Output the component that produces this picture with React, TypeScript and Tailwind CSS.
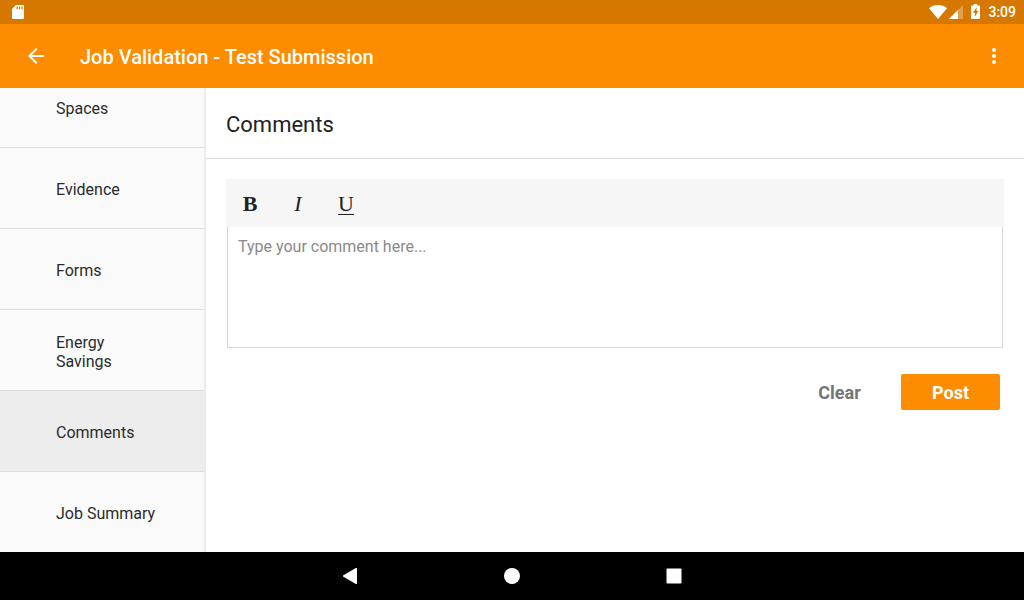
import { useState } from "react";
import clsx from "clsx";

const sections = ["Spaces", "Evidence", "Forms", "Energy Savings", "Comments", "Job Summary"];

function StatusBar() {
  return (
    <div className="flex h-6 shrink-0 items-center justify-between bg-[#d67800] pr-2 pl-3 text-white">
      <svg width="12" height="14" viewBox="0 0 12 14" fill="currentColor" aria-hidden="true">
        <path
          fillRule="evenodd"
          d="M4 0h7a1 1 0 0 1 1 1v12a1 1 0 0 1-1 1H1a1 1 0 0 1-1-1V4zM4.500 1.400v2.800h1.300V1.400zM6.900 1.400v2.800h1.300V1.400zM9.300 1.400v2.800h1.300V1.400z"
        />
      </svg>

      <div className="flex items-center">
        <svg width="18" height="14" viewBox="0 0 18 14" fill="currentColor" aria-hidden="true">
          <path d="M0 3.200C2.500 1.100 5.600 0 9 0s6.500 1.100 9 3.200L9 14z" />
        </svg>
        <svg className="ml-0.5" width="14" height="14" viewBox="0 0 14 14" fill="currentColor" aria-hidden="true">
          <path d="M14 0v14H0z" opacity="0.3" />
          <path d="M9 5v9H0z" />
        </svg>
        <svg className="mb-0.5 ml-2" width="9" height="15" viewBox="0 0 9 15" fill="currentColor" aria-hidden="true">
          <path
            fillRule="evenodd"
            d="M2.700 0h3.600v1.400H8a1 1 0 0 1 1 1V14a1 1 0 0 1-1 1H1a1 1 0 0 1-1-1V2.400a1 1 0 0 1 1-1h1.700zM5.600 3.200 1.900 8.800h2v4L7.300 7H5.600z"
          />
        </svg>
        <span className="ml-2 text-sm font-medium">3:09</span>
      </div>
    </div>
  );
}

function AppBar() {
  return (
    <header className="flex h-16 shrink-0 items-center bg-[#fd8c00] pr-[18px] pl-6 text-white">
      <button type="button" aria-label="Back" className="flex size-6 items-center justify-center">
        <svg width="24" height="24" viewBox="0 0 24 24" fill="currentColor">
          <path d="M20 11H7.830l5.590-5.590L12 4l-8 8 8 8 1.410-1.410L7.830 13H20z" />
        </svg>
      </button>
      <h1 className="ml-8 flex-1 pt-0.5 text-xl font-medium">Job Validation - Test Submission</h1>
      <button type="button" aria-label="More options" className="flex size-6 items-center justify-center">
        <svg width="24" height="24" viewBox="0 0 24 24" fill="currentColor">
          <circle cx="12" cy="6" r="2" />
          <circle cx="12" cy="12" r="2" />
          <circle cx="12" cy="18" r="2" />
        </svg>
      </button>
    </header>
  );
}

function NavigationBar() {
  return (
    <nav aria-label="System" className="flex h-12 shrink-0 justify-center bg-black text-white">
      <button type="button" aria-label="Back" className="flex w-[162px] items-center justify-center">
        <svg width="16" height="16" viewBox="0 0 16 16" fill="currentColor">
          <path d="M15 .8v14.400a.8.8 0 0 1-1.200.7L1.400 8.700a.8.8 0 0 1 0-1.400L13.800.1A.8.8 0 0 1 15 .8z" />
        </svg>
      </button>
      <button type="button" aria-label="Home" className="flex w-[162px] items-center justify-center">
        <svg width="16" height="16" viewBox="0 0 16 16" fill="currentColor">
          <circle cx="8" cy="8" r="8" />
        </svg>
      </button>
      <button type="button" aria-label="Recent apps" className="flex w-[162px] items-center justify-center">
        <svg width="16" height="16" viewBox="0 0 16 16" fill="currentColor">
          <rect x="0.500" y="0.500" width="15" height="15" rx="1" />
        </svg>
      </button>
    </nav>
  );
}

export default function App() {
  const [active, setActive] = useState("Comments");
  const [comment, setComment] = useState("");

  return (
    <div className="flex h-screen flex-col overflow-hidden bg-white font-[Roboto,sans-serif] text-[#212121]">
      <StatusBar />
      <AppBar />

      <div className="flex min-h-0 flex-1">
        {/* the list is anchored to its last entry, so the top one scrolls under the app bar */}
        <nav
          aria-label="Sections"
          className="flex w-1/5 min-w-[206px] shrink-0 flex-col justify-end overflow-hidden border-r-2 border-[#ececec] bg-[#fafafa]"
        >
          {sections.map((section) => (
            <button
              key={section}
              type="button"
              onClick={() => setActive(section)}
              className={clsx(
                "h-[81px] shrink-0 border-b border-[#dedede] pt-[3px] pr-12 pl-14 text-left text-base leading-[19px] text-[#2b2b2b] last:h-20 last:border-b-0",
                active === section && "bg-[#ededed]",
              )}
            >
              {section}
            </button>
          ))}
        </nav>

        <main className="min-w-0 flex-1">
          <div className="border-b border-[#dedede] px-5 pt-[22px] pb-[18px]">
            <h2 className="text-[22px] leading-[30px]">Comments</h2>
          </div>

          <form className="p-5" onSubmit={(event) => event.preventDefault()}>
            <div className="flex h-12 items-center bg-[#f6f6f6] font-['Liberation_Serif',serif] text-[22px]">
              <button type="button" aria-label="Bold" className="size-12 font-bold">
                B
              </button>
              <button type="button" aria-label="Italic" className="size-12 italic">
                I
              </button>
              <button
                type="button"
                aria-label="Underline"
                className="size-12 underline decoration-1 underline-offset-3"
              >
                U
              </button>
            </div>
            <div className="px-px">
              <textarea
                aria-label="Comment"
                value={comment}
                onChange={(event) => setComment(event.target.value)}
                placeholder="Type your comment here..."
                className="block h-[121px] w-full resize-none border border-t-0 border-[#d8d8d8] px-2.5 py-2 text-base outline-none placeholder:text-[#8a8a8a]"
              />
            </div>

            <div className="mt-[26px] flex justify-end gap-3 pr-1 text-lg font-bold">
              <button type="button" onClick={() => setComment("")} className="h-9 w-[99px] rounded-xs pt-0.5 text-[#757575]">
                Clear
              </button>
              <button type="submit" className="h-9 w-[99px] rounded-xs bg-[#fd8c00] pt-0.5 text-white">
                Post
              </button>
            </div>
          </form>
        </main>
      </div>

      <NavigationBar />
    </div>
  );
}
